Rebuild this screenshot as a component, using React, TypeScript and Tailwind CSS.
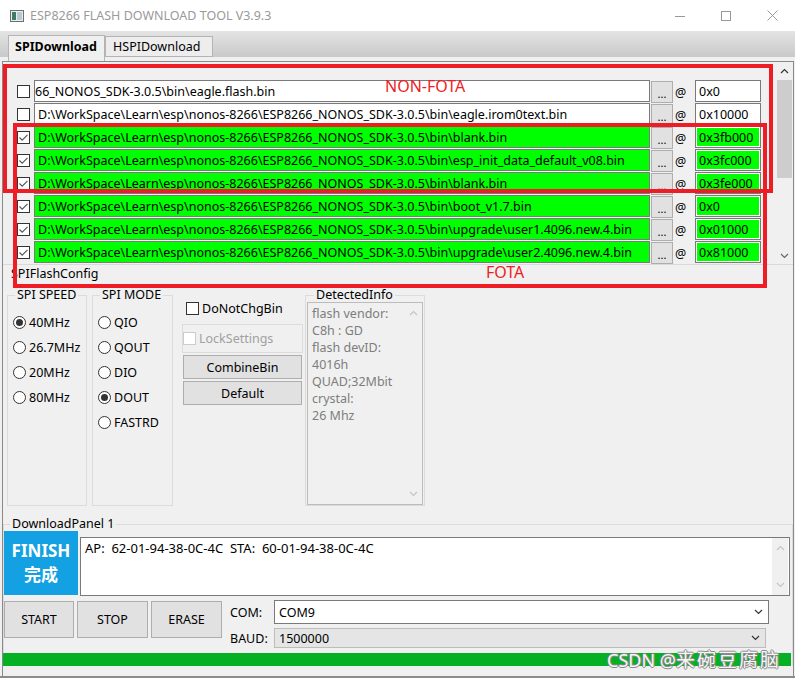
import React from "react"

const SDK = "D:\\WorkSpace\\Learn\\esp\\nonos-8266\\ESP8266_NONOS_SDK-3.0.5\\bin\\"

const files = [
  { path: "66_NONOS_SDK-3.0.5\\bin\\eagle.flash.bin", addr: "0x0", on: false, clip: true },
  { path: SDK + "eagle.irom0text.bin", addr: "0x10000", on: false },
  { path: SDK + "blank.bin", addr: "0x3fb000", on: true },
  { path: SDK + "esp_init_data_default_v08.bin", addr: "0x3fc000", on: true },
  { path: SDK + "blank.bin", addr: "0x3fe000", on: true },
  { path: SDK + "boot_v1.7.bin", addr: "0x0", on: true },
  { path: SDK + "upgrade\\user1.4096.new.4.bin", addr: "0x01000", on: true },
  { path: SDK + "upgrade\\user2.4096.new.4.bin", addr: "0x81000", on: true },
]

function Chevron({ up, color = "#333333" }: { up?: boolean; color?: string }) {
  return (
    <svg width="9" height="6" viewBox="0 0 9 6">
      <polyline points={up ? "1,5 4.5,1.5 8,5" : "1,1 4.5,4.5 8,1"} fill="none" stroke={color} strokeWidth="1.2" />
    </svg>
  )
}

function Check({ on, disabled }: { on?: boolean; disabled?: boolean }) {
  return (
    <div
      className={`w-[13px] h-[13px] shrink-0 border bg-white flex items-center justify-center ${
        disabled ? "border-[#cccccc]" : "border-[#333333]"
      }`}
    >
      {on && (
        <svg width="11" height="11" viewBox="0 0 11 11">
          <path d="M1.5 5.5 L4.2 8.2 L9.5 2.8" fill="none" stroke="#555555" strokeWidth="1.1" />
        </svg>
      )}
    </div>
  )
}

function Radio({ label, on }: { label: string; on?: boolean }) {
  return (
    <div className="h-[25px] flex items-center gap-[3px]">
      <div className="w-[13px] h-[13px] rounded-full border border-[#333333] bg-white flex items-center justify-center">
        {on && <div className="w-[7px] h-[7px] rounded-full bg-[#333333]" />}
      </div>
      <span>{label}</span>
    </div>
  )
}

function FileRow({ path, addr, on, clip }: { path: string; addr: string; on: boolean; clip?: boolean }) {
  return (
    <div className="h-[23px] flex items-start">
      <div className="w-[31px] h-[22px] flex items-center justify-end pr-[4px]">
        <Check on={on} />
      </div>
      <div
        className={`w-[616px] h-[22px] border border-[#7a7a7a] pl-[3px] overflow-hidden whitespace-nowrap leading-[21px] ${
          on ? "bg-[#00ff00]" : "bg-white"
        }`}
      >
        <span className={clip ? "inline-block -ml-[3px]" : ""}>{path}</span>
      </div>
      <div className="ml-[1px] mt-[1px] w-[22px] h-[22px] border border-[#adadad] bg-[#e1e1e1] flex items-end justify-center leading-[16px] text-[11px]">
        ...
      </div>
      <div className="w-[22px] h-[22px] pl-[2px] flex items-center pt-[3px]">@</div>
      {on ? (
        <div className="w-[66px] h-[22px] border border-[#7a7a7a] bg-white p-[1px]">
          <div className="h-full bg-[#00ff00] pl-[2px] leading-[19px]">{addr}</div>
        </div>
      ) : (
        <div className="w-[66px] h-[22px] border border-[#7a7a7a] bg-white pl-[3px] leading-[21px]">{addr}</div>
      )}
    </div>
  )
}

function Button({ label, className }: { label: string; className: string }) {
  return (
    <div className={`border border-[#adadad] bg-[#e1e1e1] flex items-center justify-center ${className}`}>{label}</div>
  )
}

export default function App() {
  return (
    <div className="relative w-[795px] h-[678px] overflow-hidden bg-[#f0f0f0] text-black text-[12.5px] leading-[17px] font-['Noto_Sans','Noto_Sans_CJK_SC',sans-serif] flex flex-col border-b-2 border-[#8c8c8c]">
      {/* title bar */}
      <div className="h-[31px] shrink-0 bg-white flex items-center">
        <div className="pl-[10px] pr-[6px] pt-[1px]">
          <svg width="14" height="12" viewBox="0 0 14 12">
            <rect x="0.5" y="0.5" width="13" height="11" fill="#e9eef0" stroke="#6e6e6e" />
            <rect x="2" y="2" width="4" height="8" fill="#3d7a6a" />
            <rect x="7" y="2" width="5" height="8" fill="#b9c9d1" />
          </svg>
        </div>
        <span className="text-[#9a9a9a] text-[12.5px]">ESP8266 FLASH DOWNLOAD TOOL V3.9.3</span>
        <div className="ml-auto flex h-full">
          <div className="w-[46px] flex items-center justify-center">
            <svg width="10" height="10" viewBox="0 0 10 10">
              <line x1="0" y1="5.5" x2="10" y2="5.5" stroke="#999999" />
            </svg>
          </div>
          <div className="w-[46px] flex items-center justify-center">
            <svg width="10" height="10" viewBox="0 0 10 10">
              <rect x="0.5" y="0.5" width="9" height="9" fill="none" stroke="#999999" />
            </svg>
          </div>
          <div className="w-[46px] flex items-center justify-center">
            <svg width="11" height="11" viewBox="0 0 11 11">
              <path d="M0.5 0.5 L10.5 10.5 M10.5 0.5 L0.5 10.5" stroke="#999999" />
            </svg>
          </div>
        </div>
      </div>

      {/* tab strip */}
      <div className="h-[30px] shrink-0 flex items-start pl-[8px] bg-[linear-gradient(to_bottom,#e4e4e4_0px,#c9c9c9_26px,#f0f0f0_26px)]">
        <div className="mt-[4px] w-[97px] h-[26px] border-l border-t border-r border-[#b4b4b4] bg-[#f0f0f0] font-bold pl-[6px] pt-[2px]">
          SPIDownload
        </div>
        <div className="mt-[5px] w-[108px] h-[21px] border border-[#b4b4b4] bg-[#ededed] pl-[7px] leading-[19px]">
          HSPIDownload
        </div>
      </div>

      {/* tab page */}
      <div className="flex-1 pl-[2px] pr-[1px] flex flex-col">
        <div className="flex-1 border-l border-t border-r border-[#898989] flex flex-col">
          {/* file list */}
          <div className="h-[203px] shrink-0 border-b border-[#d9d9d9] flex">
            <div className="flex-1 pt-[18px]">
              {files.map((f, i) => (
                <FileRow key={i} {...f} />
              ))}
            </div>
            <div className="w-[17px] flex flex-col">
              <div className="h-[17px] flex items-center justify-center">
                <Chevron up />
              </div>
              <div className="mt-[1px] mx-[1px] h-[98px] bg-[#cdcdcd]" />
              <div className="flex-1" />
              <div className="h-[17px] flex items-center justify-center">
                <Chevron color="#666666" />
              </div>
            </div>
          </div>

          {/* SPIFlashConfig */}
          <div className="h-[17px] pl-[8px]">SPIFlashConfig</div>
          <div className="mt-[5px] flex items-start">
            <fieldset className="ml-[4px] w-[80px] h-[219px] border border-[#dcdcdc]">
              <legend className="ml-[7px] px-[2px] leading-[16px]">SPI SPEED</legend>
              <div className="pl-[5px] pt-[7px]">
                <Radio label="40MHz" on />
                <Radio label="26.7MHz" />
                <Radio label="20MHz" />
                <Radio label="80MHz" />
              </div>
            </fieldset>
            <fieldset className="ml-[5px] w-[81px] h-[219px] border border-[#dcdcdc]">
              <legend className="ml-[7px] px-[2px] leading-[16px]">SPI MODE</legend>
              <div className="pl-[5px] pt-[7px]">
                <Radio label="QIO" />
                <Radio label="QOUT" />
                <Radio label="DIO" />
                <Radio label="DOUT" on />
                <Radio label="FASTRD" />
              </div>
            </fieldset>
            <div className="ml-[9px] w-[121px] h-[219px] flex flex-col">
              <div className="mt-[13px] h-[17px] pl-[4px] flex items-center gap-[3px]">
                <Check />
                <span>DoNotChgBin</span>
              </div>
              <div className="mt-[7px] h-[29px] border border-[#dcdcdc] flex items-center gap-[3px]">
                <Check disabled />
                <span className="text-[#a0a0a0]">LockSettings</span>
              </div>
              <Button label="CombineBin" className="mt-[2px] ml-[1px] w-[119px] h-[24px]" />
              <Button label="Default" className="mt-[2px] ml-[1px] w-[119px] h-[24px]" />
            </div>
            <fieldset className="ml-[2px] w-[120px] h-[219px] border border-[#dcdcdc]">
              <legend className="ml-[8px] px-[2px] leading-[16px]">DetectedInfo</legend>
              <div className="-mt-[1px] mx-[1px] h-[203px] border border-[#bcbcbc] flex text-[#7d7d7d]">
                <div className="flex-1 pl-[4px] pt-[2px]">
                  <div>flash vendor:</div>
                  <div>C8h : GD</div>
                  <div>flash devID:</div>
                  <div>4016h</div>
                  <div>QUAD;32Mbit</div>
                  <div>crystal:</div>
                  <div>26 Mhz</div>
                </div>
                <div className="w-[17px] flex flex-col justify-between items-center py-[7px]">
                  <Chevron up color="#c4c4c4" />
                  <Chevron color="#c4c4c4" />
                </div>
              </div>
            </fieldset>
          </div>

          {/* DownloadPanel */}
          <fieldset className="mt-[10px] border-t border-l border-r border-[#dcdcdc] pr-[1px]">
            <legend className="ml-[6px] px-[2px] leading-[16px]">DownloadPanel 1</legend>
            <div className="-mt-[1px] flex items-start">
              <div className="w-[74px] h-[64px] bg-[#13a1e3] text-white font-bold flex flex-col items-center justify-center">
                <div className="text-[17px] leading-[24px]">FINISH</div>
                <div className="text-[17px] leading-[24px]">完成</div>
              </div>
              <div className="ml-[2px] mt-[6px] w-[710px] h-[59px] border border-[#7a7a7a] bg-white flex">
                <div className="flex-1 pl-[4px] pt-[2px] whitespace-pre text-[13px]">AP:  62-01-94-38-0C-4C  STA:  60-01-94-38-0C-4C</div>
                <div className="w-[16px] mr-[1px] bg-[#f0f0f0] flex flex-col justify-between items-center py-[7px]">
                  <Chevron up color="#c4c4c4" />
                  <Chevron color="#c4c4c4" />
                </div>
              </div>
            </div>
            <div className="mt-[5px] flex items-start">
              <Button label="START" className="w-[70px] h-[37px]" />
              <Button label="STOP" className="ml-[3px] w-[71px] h-[37px]" />
              <Button label="ERASE" className="ml-[3px] w-[71px] h-[37px]" />
              <div className="ml-[8px] -mt-[1px] flex flex-col">
                <div className="h-[24px] flex items-center">
                  <span className="w-[44px]">COM:</span>
                  <div className="w-[495px] h-[24px] border border-[#7a7a7a] bg-white flex items-center justify-between pl-[4px] pr-[5px]">
                    <span>COM9</span>
                    <Chevron />
                  </div>
                </div>
                <div className="mt-[4px] h-[20px] flex items-center">
                  <span className="w-[44px]">BAUD:</span>
                  <div className="w-[492px] h-[20px] border border-[#bcbcbc] bg-[#e5e5e5] flex items-center justify-between pl-[4px] pr-[5px]">
                    <span>1500000</span>
                    <Chevron />
                  </div>
                </div>
              </div>
            </div>
            <div className="mt-[5px] -ml-[1px] h-[13px] bg-[#06b025]" />
          </fieldset>
        </div>
      </div>

      {/* annotations */}
      <div className="absolute left-[3px] top-[64px] w-[770px] h-[129px] border-4 border-[#ee1c24]" />
      <div className="absolute left-[13px] top-[123px] w-[754px] h-[165px] border-4 border-[#ee1c24]" />
      <div className="absolute left-[385px] top-[76px] text-[16px] leading-[20px] text-[#ee1c24]">NON-FOTA</div>
      <div className="absolute left-[486px] top-[262px] text-[16px] leading-[20px] text-[#ee1c24]">FOTA</div>
      <div className="absolute left-[607px] top-[649px] flex items-baseline text-[#f6f6f6] [text-shadow:1px_0_0_#8a8a8a,-1px_0_0_#8a8a8a,0_1px_0_#8a8a8a,0_-1px_0_#8a8a8a]">
        <span className="text-[18px] leading-[22px] whitespace-pre">CSDN @</span>
        <span className="text-[19px] leading-[22px] tracking-[2px]">来碗豆腐脑</span>
      </div>
    </div>
  )
}
